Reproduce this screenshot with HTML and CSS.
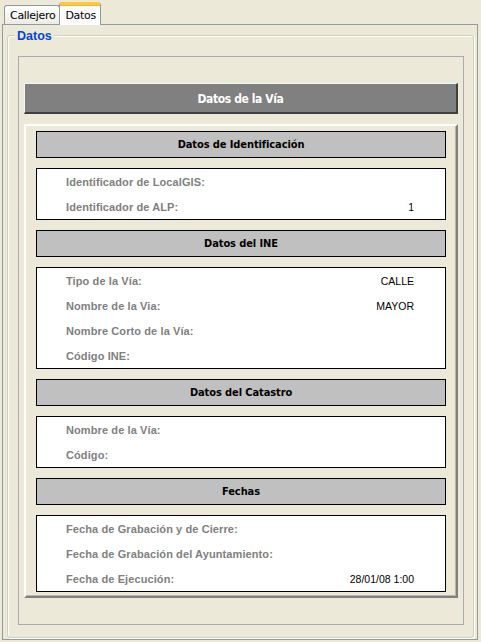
FILE: index.html
```html
<!DOCTYPE html>
<html lang="es">
<head>
<meta charset="utf-8">
<title>Datos</title>
<link rel="stylesheet" href="styles.css">
</head>
<body>
<div class="tabs">
  <div class="tab">Callejero</div>
  <div class="tab active">Datos</div>
</div>
<div class="panel">
  <div class="group">
    <div class="group-title">Datos</div>
    <div class="inner">
      <div class="bar">Datos de la Vía</div>
      <div class="content">
        <div class="sec-head">Datos de Identificación</div>
        <div class="sec-box">
          <div class="row"><span class="lbl">Identificador de LocalGIS:</span><span class="val"></span></div>
          <div class="row"><span class="lbl">Identificador de ALP:</span><span class="val">1</span></div>
        </div>
        <div class="sec-head">Datos del INE</div>
        <div class="sec-box">
          <div class="row"><span class="lbl">Tipo de la Vía:</span><span class="val">CALLE</span></div>
          <div class="row"><span class="lbl">Nombre de la Via:</span><span class="val">MAYOR</span></div>
          <div class="row"><span class="lbl">Nombre Corto de la Vía:</span><span class="val"></span></div>
          <div class="row"><span class="lbl">Código INE:</span><span class="val"></span></div>
        </div>
        <div class="sec-head">Datos del Catastro</div>
        <div class="sec-box">
          <div class="row"><span class="lbl">Nombre de la Vía:</span><span class="val"></span></div>
          <div class="row"><span class="lbl">Código:</span><span class="val"></span></div>
        </div>
        <div class="sec-head">Fechas</div>
        <div class="sec-box">
          <div class="row"><span class="lbl">Fecha de Grabación y de Cierre:</span><span class="val"></span></div>
          <div class="row"><span class="lbl">Fecha de Grabación del Ayuntamiento:</span><span class="val"></span></div>
          <div class="row"><span class="lbl">Fecha de Ejecución:</span><span class="val">28/01/08 1:00</span></div>
        </div>
      </div>
    </div>
  </div>
</div>
</body>
</html>
```
FILE: styles.css
```css
* { box-sizing: border-box; }
html, body { margin: 0; padding: 0; }
body {
  width: 481px;
  height: 642px;
  background: #ece9d8;
  font-family: "Liberation Sans", Arial, sans-serif;
  font-size: 11px;
  color: #000;
  overflow: hidden;
}
.tabs {
  height: 24px;
  display: flex;
  align-items: flex-end;
  padding-left: 4px;
  position: relative;
  z-index: 2;
}
.tab {
  height: 19px;
  padding: 3px 4px 0 5px;
  border: 1px solid #919b9c;
  border-bottom: none;
  border-radius: 3px 3px 0 0;
  background: linear-gradient(#ffffff, #ecebe6);
  font-family: "DejaVu Sans", sans-serif;
  font-size: 11px;
  letter-spacing: -0.3px;
  color: #000;
}
.tab.active {
  height: 23px;
  margin-bottom: -1px;
  margin-left: -1px;
  padding: 4px 4px 0 5px;
  background: #fcfcfe;
  border-top: 3px solid #ffc83c;
  box-shadow: inset 0 1px 0 #f8b640;
  border-radius: 3px 3px 0 0;
}
.panel {
  margin-left: 2px;
  width: 476px;
  height: 616px;
  border: 1px solid #919b9c;
  background: #ece9d8;
  padding: 10px 3px 2px 4px;
}
.group {
  position: relative;
  height: 603px;
  border: 1px solid #d0d0bf;
  border-radius: 3px;
  box-shadow: inset 1px 1px 0 #fff, 1px 1px 0 #fff;
  padding: 20px 9px 12px 10px;
}
.group-title {
  position: absolute;
  left: 7px;
  top: -6px;
  padding: 0 2px;
  background: #ece9d8;
  color: #0046d5;
  font-weight: bold;
  font-size: 12.5px;
  line-height: 13px;
}
.inner {
  height: 569px;
  border: 1px solid #a5acb2;
  padding: 26px 5px 0 5px;
}
.bar {
  height: 31px;
  background: #808080;
  border-top: 1px solid #f4f4f4;
  border-left: 1px solid #f4f4f4;
  border-bottom: 2px solid #404040;
  border-right: 2px solid #404040;
  color: #fff;
  font-family: "DejaVu Sans Condensed", "Liberation Sans", sans-serif;
  font-stretch: condensed;
  font-weight: bold;
  font-size: 12px;
  letter-spacing: -0.4px;
  display: flex;
  align-items: center;
  justify-content: center;
  padding-top: 1px;
}
.content {
  margin-top: 10px;
  height: 474px;
  border-top: 2px solid #fff;
  border-left: 2px solid #fff;
  border-right: 2px solid #808080;
  border-bottom: 2px solid #808080;
  box-shadow: inset -1px -1px 0 #b8b6a8;
  padding: 5px 10px 0 10px;
}
.sec-head {
  height: 27px;
  background: #c0c0c0;
  border: 1px solid #000;
  display: flex;
  align-items: center;
  justify-content: center;
  font-family: "DejaVu Sans Condensed", "Liberation Sans", sans-serif;
  font-stretch: condensed;
  font-weight: bold;
  font-size: 11px;
  letter-spacing: -0.1px;
  margin-bottom: 10px;
}
.sec-box {
  background: #fff;
  border: 1px solid #000;
  margin-bottom: 10px;
}
.row {
  height: 25px;
  display: flex;
  align-items: center;
  justify-content: space-between;
  padding: 1px 31px 0 29px;
}
.lbl {
  color: #808080;
  font-weight: bold;
  font-size: 11px;
  letter-spacing: 0.1px;
}
.val {
  font-size: 10.5px;
  color: #000;
}
```
